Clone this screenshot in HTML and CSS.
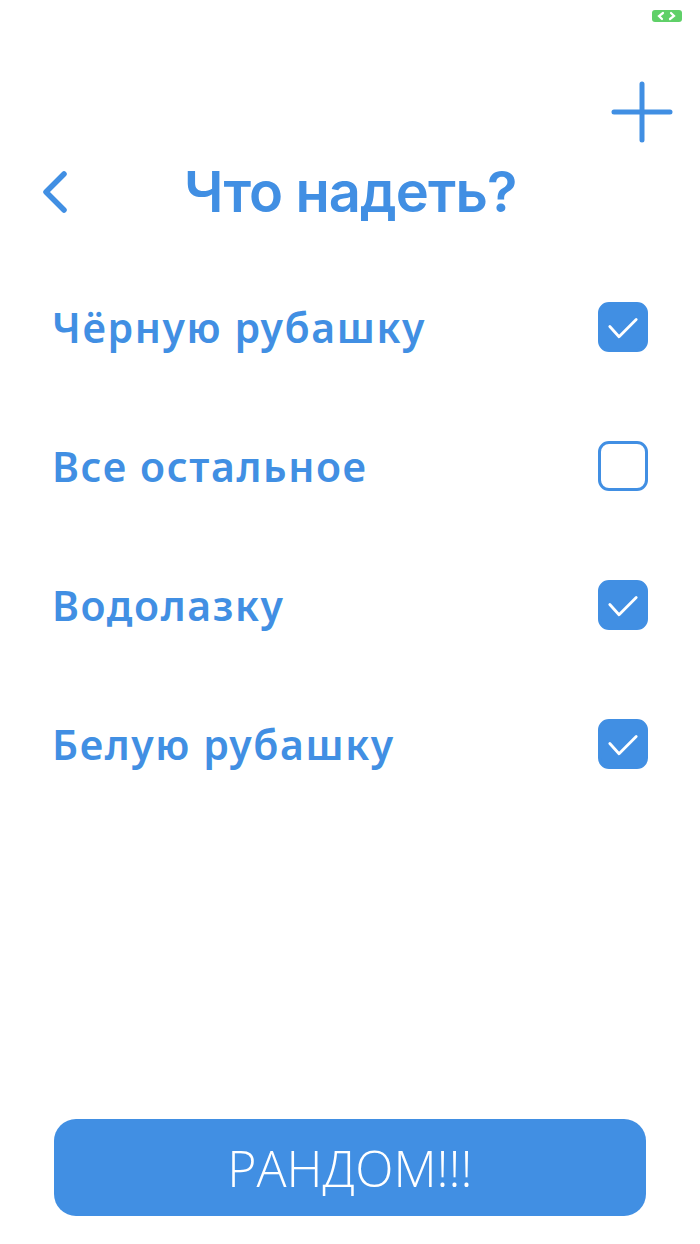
FILE: index.html
```html
<!DOCTYPE html>
<html>
<head>
    <link rel="stylesheet" href="styles.css">
</head>
<body>
    <div class="status-bar">
        <svg class="status-icon" width="30" height="12" viewBox="0 0 30 12">
            <rect x="0" y="0" width="30" height="12" rx="3" fill="#5fd068"/>
            <path d="M11 3 L7 6 L10 9" stroke="#fff" stroke-width="2.2" fill="none" stroke-linecap="round"/>
            <path d="M19 3 L22 6 L18 9" stroke="#fff" stroke-width="2.2" fill="none" stroke-linecap="round"/>
        </svg>
    </div>

    <div class="top-actions">
        <svg class="plus" width="62" height="62" viewBox="0 0 62 62">
            <path d="M31 3 V59 M3 31 H59" stroke="#418fe3" stroke-width="5" stroke-linecap="round"/>
        </svg>
    </div>

    <div class="header">
        <svg class="back" width="30" height="44" viewBox="0 0 30 44">
            <path d="M24 4 L6 22 L24 40" stroke="#418fe3" stroke-width="5.5" fill="none" stroke-linecap="round" stroke-linejoin="round"/>
        </svg>
        <h1 class="title">Что надеть?</h1>
    </div>

    <div class="list">
        <div class="item">
            <span class="item-name">Чёрную рубашку</span>
            <span class="check checked">
                <svg width="50" height="50" viewBox="0 0 50 50"><path d="M10 24.5 L20.5 36 L40 16.5" stroke="#fff" stroke-width="3.2" fill="none" stroke-linecap="round" stroke-linejoin="round"/></svg>
            </span>
        </div>
        <div class="item">
            <span class="item-name">Все остальное</span>
            <span class="check"></span>
        </div>
        <div class="item">
            <span class="item-name">Водолазку</span>
            <span class="check checked">
                <svg width="50" height="50" viewBox="0 0 50 50"><path d="M10 24.5 L20.5 36 L40 16.5" stroke="#fff" stroke-width="3.2" fill="none" stroke-linecap="round" stroke-linejoin="round"/></svg>
            </span>
        </div>
        <div class="item">
            <span class="item-name">Белую рубашку</span>
            <span class="check checked">
                <svg width="50" height="50" viewBox="0 0 50 50"><path d="M10 24.5 L20.5 36 L40 16.5" stroke="#fff" stroke-width="3.2" fill="none" stroke-linecap="round" stroke-linejoin="round"/></svg>
            </span>
        </div>
    </div>

    <div class="footer">
        <button class="random">РАНДОМ!!!</button>
    </div>
</body>
</html>
```

FILE: styles.css
```css
body {
    margin: 0;
    padding: 0;
    width: 700px;
    height: 1244px;
    background: #fff;
    font-family: Inter, "Noto Sans", sans-serif;
    color: #418fe3;
    display: flex;
    flex-direction: column;
    overflow: hidden;
}

.status-bar {
    height: 34px;
    display: flex;
    justify-content: flex-end;
    align-items: flex-start;
    padding: 10px 18px 0 0;
    box-sizing: border-box;
}

.top-actions {
    display: flex;
    justify-content: flex-end;
    padding: 47px 27px 0 0;
}

.header {
    display: flex;
    align-items: center;
    height: 70px;
    margin-top: 14px;
    padding-left: 40px;
}

.back {
    flex: none;
}

.title {
    margin: 0 0 0 114px;
    font-size: 56px;
    font-weight: 600;
    letter-spacing: -0.9px;
}

.list {
    display: flex;
    flex-direction: column;
    margin-top: 60px;
    padding: 0 52px;
}

.item {
    height: 139px;
    display: flex;
    align-items: center;
    justify-content: space-between;
    margin-top: -30px;
}

.item + .item {
    margin-top: 0;
}

.item-name {
    font-family: "Noto Sans", sans-serif;
    font-size: 41px;
    font-weight: 600;
    letter-spacing: 1.6px;
}

.check {
    width: 50px;
    height: 50px;
    box-sizing: border-box;
    border: 3px solid #418fe3;
    border-radius: 11px;
    display: flex;
    align-items: center;
    justify-content: center;
}

.check.checked {
    background: #418fe3;
}

.footer {
    margin-top: auto;
    padding: 0 54px 28px;
}

.random {
    width: 100%;
    height: 97px;
    border: none;
    border-radius: 22px;
    background: #418fe3;
    color: #fff;
    font-family: "Open Sans", sans-serif;
    font-size: 50px;
    font-weight: 300;
}
```
